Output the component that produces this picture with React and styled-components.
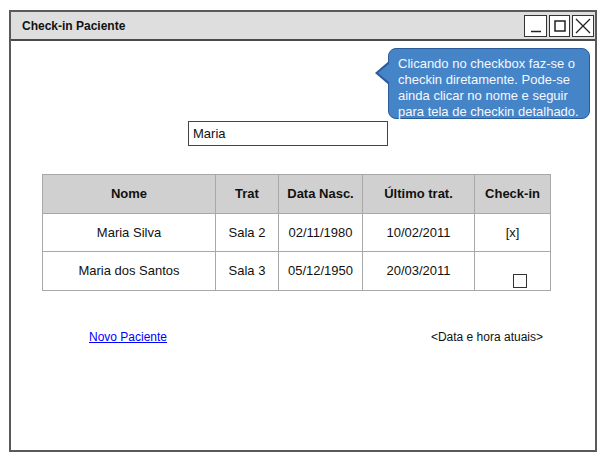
import styled, { createGlobalStyle } from 'styled-components'

const GlobalStyle = createGlobalStyle`
  body {
    margin: 0;
    background: #fff;
    font-family: "Liberation Sans", Arial, sans-serif;
  }
`

const Page = styled.div`
  padding: 10px 11px 15px 9px;
`

const Window = styled.div`
  width: 588px;
  height: 442px;
  box-sizing: border-box;
  border: 2px solid #5a5a5a;
  display: flex;
  flex-direction: column;
`

const TitleBar = styled.div`
  height: 29px;
  box-sizing: border-box;
  background: #dedede;
  border-bottom: 2px solid #4a4a4a;
  display: flex;
  align-items: center;
  justify-content: space-between;
  padding: 0 1px 0 11px;
`

const Title = styled.span`
  font-size: 12px;
  font-weight: bold;
  color: #111;
`

const Controls = styled.div`
  display: flex;
  gap: 2px;
`

const CtrlButton = styled.div`
  width: ${({ $w }) => $w}px;
  height: 22px;
  box-sizing: border-box;
  border: 1.5px solid #333;
  background: #fff;
  display: flex;
  align-items: center;
  justify-content: center;
`

const Content = styled.div`
  position: relative;
  flex: 1;
`

const Callout = styled.div`
  position: absolute;
  left: 377px;
  top: 7px;
  width: 202px;
  height: 71px;
  box-sizing: border-box;
  background: #4684c8;
  border: 1.5px solid #2c5b99;
  border-radius: 8px;
  padding: 7px 4px 0 9px;
  color: #f4f8ff;
  font-size: 13px;
  line-height: 16px;
  white-space: nowrap;

  &::before {
    content: '';
    position: absolute;
    left: -14px;
    top: 12px;
    border-style: solid;
    border-width: 12px 14px 12px 0;
    border-color: transparent #2c5b99 transparent transparent;
  }
  &::after {
    content: '';
    position: absolute;
    left: -11px;
    top: 14px;
    border-style: solid;
    border-width: 10px 12px 10px 0;
    border-color: transparent #4684c8 transparent transparent;
  }
`

const SearchInput = styled.div`
  margin: 80px 0 0 177px;
  width: 200px;
  height: 25px;
  box-sizing: border-box;
  border: 1.5px solid #444;
  font-size: 13px;
  padding: 0 4px;
  display: flex;
  align-items: center;
  color: #111;
`

const Table = styled.div`
  margin: 28px 0 0 31px;
  width: 508px;
  display: grid;
  grid-template-columns: 173px 63px 84px 112px 76px;
  border-top: 1px solid #a8a8a8;
  border-left: 1px solid #a8a8a8;
`

const Cell = styled.div`
  height: 38.5px;
  box-sizing: border-box;
  border-right: 1px solid #a8a8a8;
  border-bottom: 1px solid #a8a8a8;
  background: ${({ $head }) => ($head ? '#d0d0d0' : '#fff')};
  font-size: 13px;
  font-weight: ${({ $head }) => ($head ? 'bold' : 'normal')};
  color: #111;
  display: flex;
  align-items: center;
  justify-content: center;
  position: relative;
`

const Check = styled.div`
  position: absolute;
  left: 38px;
  bottom: 2px;
  width: 14px;
  height: 14px;
  box-sizing: border-box;
  border: 1.5px solid #333;
  background: #fff;
`

const Footer = styled.div`
  margin-top: 39px;
  padding: 0 52px 0 78px;
  display: flex;
  justify-content: space-between;
  align-items: center;
  font-size: 12px;
`

const Link = styled.a`
  color: #0000ff;
  text-decoration: underline;
`

const Stamp = styled.span`
  color: #111;
`

const rows = [
  ['Maria Silva', 'Sala 2', '02/11/1980', '10/02/2011', '[x]'],
  ['Maria dos Santos', 'Sala 3', '05/12/1950', '20/03/2011', null],
]

const calloutLines = [
  'Clicando no checkbox faz-se o',
  'checkin diretamente. Pode-se',
  'ainda clicar no nome e seguir',
  'para tela de checkin detalhado.',
]

export default function App() {
  return (
    <Page>
      <GlobalStyle />
      <Window>
        <TitleBar>
          <Title>Check-in Paciente</Title>
          <Controls>
            <CtrlButton $w={23}>
              <svg width="14" height="14" viewBox="0 0 14 14">
                <path d="M2 12.5 L12 12.5" stroke="#222" strokeWidth="1.5" />
              </svg>
            </CtrlButton>
            <CtrlButton $w={21}>
              <svg width="14" height="14" viewBox="0 0 14 14">
                <rect x="2" y="2" width="10" height="10" fill="none" stroke="#222" strokeWidth="1.5" />
              </svg>
            </CtrlButton>
            <CtrlButton $w={22}>
              <svg width="16" height="16" viewBox="0 0 16 16">
                <path d="M1 1 L15 15 M15 1 L1 15" stroke="#222" strokeWidth="1.3" />
              </svg>
            </CtrlButton>
          </Controls>
        </TitleBar>
        <Content>
          <Callout>
            {calloutLines.map((l) => (
              <div key={l}>{l}</div>
            ))}
          </Callout>
          <SearchInput>Maria</SearchInput>
          <Table>
            {['Nome', 'Trat', 'Data Nasc.', 'Último trat.', 'Check-in'].map((h) => (
              <Cell key={h} $head>{h}</Cell>
            ))}
            {rows.map((r) =>
              r.map((v, i) => (
                <Cell key={r[0] + i}>
                  {i === 4 && v === null ? <Check /> : v}
                </Cell>
              ))
            )}
          </Table>
          <Footer>
            <Link href="#">Novo Paciente</Link>
            <Stamp>&lt;Data e hora atuais&gt;</Stamp>
          </Footer>
        </Content>
      </Window>
    </Page>
  )
}
